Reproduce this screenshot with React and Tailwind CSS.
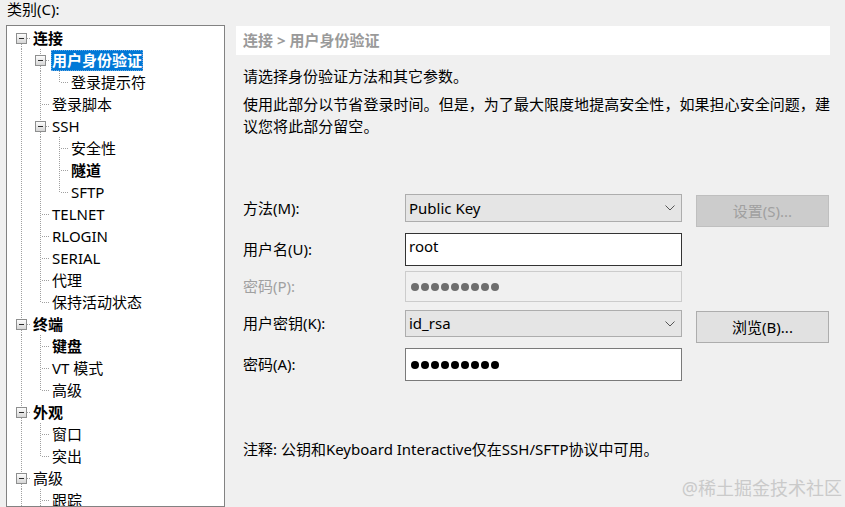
import React from "react";

const FONT = { fontFamily: '"Noto Sans", "Noto Sans CJK SC", sans-serif' };

// flattened tree: level, label, bold, exp (has expander), next (has a later sibling), guides (ancestor lines)
const rows = [
    { level: 0, label: "连接", bold: true, exp: true, next: true, first: true, guides: [] },
    { level: 1, label: "用户身份验证", bold: true, exp: true, next: true, guides: [true], selected: true },
    { level: 2, label: "登录提示符", next: false, guides: [true, true] },
    { level: 1, label: "登录脚本", next: true, guides: [true] },
    { level: 1, label: "SSH", exp: true, next: true, guides: [true] },
    { level: 2, label: "安全性", next: true, guides: [true, true] },
    { level: 2, label: "隧道", bold: true, next: true, guides: [true, true] },
    { level: 2, label: "SFTP", next: false, guides: [true, true] },
    { level: 1, label: "TELNET", next: true, guides: [true] },
    { level: 1, label: "RLOGIN", next: true, guides: [true] },
    { level: 1, label: "SERIAL", next: true, guides: [true] },
    { level: 1, label: "代理", next: true, guides: [true] },
    { level: 1, label: "保持活动状态", next: false, guides: [true] },
    { level: 0, label: "终端", bold: true, exp: true, next: true, guides: [] },
    { level: 1, label: "键盘", bold: true, next: true, guides: [true] },
    { level: 1, label: "VT 模式", next: true, guides: [true] },
    { level: 1, label: "高级", next: false, guides: [true] },
    { level: 0, label: "外观", bold: true, exp: true, next: true, guides: [] },
    { level: 1, label: "窗口", next: true, guides: [true] },
    { level: 1, label: "突出", next: false, guides: [true] },
    { level: 0, label: "高级", exp: true, next: true, guides: [] },
    { level: 1, label: "跟踪", next: true, guides: [true] },
];

function GuideCell({ on }) {
    return (
        <svg width="19" height="22" className="shrink-0">
            {on && <line x1="9.5" y1="0" x2="9.5" y2="22" stroke="#a0a0a0" strokeDasharray="1 1" />}
        </svg>
    );
}

function ConnectorCell({ row }) {
    return (
        <svg width="19" height="22" className="shrink-0">
            <defs>
                <linearGradient id="exp" x1="0" y1="0" x2="0" y2="1">
                    <stop offset="0" stopColor="#ffffff" />
                    <stop offset="1" stopColor="#d4d4d4" />
                </linearGradient>
            </defs>
            {!row.first && <line x1="9.5" y1="0" x2="9.5" y2={row.exp ? 6 : 11} stroke="#a0a0a0" strokeDasharray="1 1" />}
            {row.next && <line x1="9.5" y1={row.exp ? 17 : 12} x2="9.5" y2="22" stroke="#a0a0a0" strokeDasharray="1 1" />}
            <line x1={row.exp ? 15 : 11} y1="11.5" x2="19" y2="11.5" stroke="#a0a0a0" strokeDasharray="1 1" />
            {row.exp && (
                <g>
                    <rect x="4.5" y="6.5" width="10" height="10" fill="url(#exp)" stroke="#8e8f8f" />
                    <line x1="7" y1="11.5" x2="12" y2="11.5" stroke="#2c2c2c" />
                </g>
            )}
        </svg>
    );
}

function TreeRow({ row }) {
    return (
        <div className="flex h-[22px] items-center">
            {row.guides.map((on, i) => (
                <GuideCell key={i} on={on} />
            ))}
            <ConnectorCell row={row} />
            {row.selected ? (
                <span className="ml-[1px] h-[21px] px-[1px] leading-[20px] bg-[#0078d7] text-white font-bold outline outline-1 outline-dotted outline-[#6aa8e0] -outline-offset-1 whitespace-nowrap">
                    {row.label}
                </span>
            ) : (
                <span className={`ml-[2px] leading-[20px] whitespace-nowrap text-black ${row.bold ? "font-bold" : ""}`}>
                    {row.label}
                </span>
            )}
        </div>
    );
}

function Dots({ color }) {
    return (
        <div className="flex gap-[2px]">
            {Array.from({ length: 9 }).map((_, i) => (
                <span key={i} className={`h-[8px] w-[8px] rounded-full ${color}`} />
            ))}
        </div>
    );
}

function Chevron() {
    return (
        <svg width="10" height="6" className="ml-auto mr-[6px]">
            <polyline points="0.5,0.5 5,5 9.5,0.5" fill="none" stroke="#555" strokeWidth="1" />
        </svg>
    );
}

export default function App() {
    return (
        <div className="relative flex h-[507px] w-[845px] overflow-hidden bg-[#f0f0f0] text-[15px] text-black" style={FONT}>
            {/* left: category tree */}
            <div className="flex w-[225px] shrink-0 flex-col pl-[6px]">
                <div className="h-[26px] pl-[1px] leading-[18px]">类别(C):</div>
                <div className="h-[495px] overflow-hidden border border-[#828282] bg-white pl-[5px] pt-[1px]">
                    {rows.map((row, i) => (
                        <TreeRow key={i} row={row} />
                    ))}
                </div>
            </div>

            {/* right: settings page */}
            <div className="ml-[11px] flex w-[594px] flex-col pt-[26px]">
                <div className="flex h-[29px] items-center bg-white pl-[7px] font-bold text-[#9a9a9a]">
                    连接 &gt; 用户身份验证
                </div>
                <div className="pl-[7px]">
                    <p className="mt-[10px] leading-[22px]">请选择身份验证方法和其它参数。</p>
                    <p className="mt-[6px] leading-[22px] whitespace-nowrap tracking-[0.05px]">
                        使用此部分以节省登录时间。但是，为了最大限度地提高安全性，如果担心安全问题，建
                        <br />
                        议您将此部分留空。
                    </p>

                    <div className="mt-[57px]">
                        <div className="flex items-start">
                            <label className="flex h-[28px] w-[162px] shrink-0 items-center">方法(M):</label>
                            <div className="flex h-[28px] w-[277px] shrink-0 items-center border border-[#adadad] bg-[#e5e5e5] pl-[3px]">
                                Public Key
                                <Chevron />
                            </div>
                            <button className="ml-[14px] mt-[1px] h-[32px] w-[133px] shrink-0 border border-[#bfbfbf] bg-[#cccccc] text-[#a0a0a0]">
                                设置(S)...
                            </button>
                        </div>

                        <div className="mt-[6px] flex items-center">
                            <label className="w-[162px] shrink-0">用户名(U):</label>
                            <div className="flex h-[33px] w-[277px] shrink-0 items-center border border-[#333333] bg-white pl-[3px] pb-[6px]">
                                root
                            </div>
                        </div>

                        <div className="mt-[5px] flex items-center">
                            <label className="w-[162px] shrink-0 text-[#a0a0a0]">密码(P):</label>
                            <div className="flex h-[31px] w-[277px] shrink-0 items-center border border-[#cccccc] bg-[#f0f0f0] pl-[5px]">
                                <Dots color="bg-[#6d6d6d]" />
                            </div>
                        </div>

                        <div className="mt-[8px] flex items-start">
                            <label className="flex h-[27px] w-[162px] shrink-0 items-center">用户密钥(K):</label>
                            <div className="flex h-[27px] w-[277px] shrink-0 items-center border border-[#adadad] bg-[#e5e5e5] pl-[3px]">
                                id_rsa
                                <Chevron />
                            </div>
                            <button className="ml-[14px] mt-[1px] h-[32px] w-[133px] shrink-0 border border-[#adadad] bg-[#e1e1e1]">
                                浏览(B)...
                            </button>
                        </div>

                        <div className="mt-[5px] flex items-center">
                            <label className="w-[162px] shrink-0">密码(A):</label>
                            <div className="flex h-[33px] w-[277px] shrink-0 items-center border border-[#7a7a7a] bg-white pl-[5px]">
                                <Dots color="bg-black" />
                            </div>
                        </div>
                    </div>

                    <p className="mt-[57px] leading-[22px]">注释: 公钥和Keyboard Interactive仅在SSH/SFTP协议中可用。</p>
                </div>
            </div>

            <div className="absolute bottom-[5px] right-[3px] text-[18px] text-[#cacaca]">@稀土掘金技术社区</div>
        </div>
    );
}
